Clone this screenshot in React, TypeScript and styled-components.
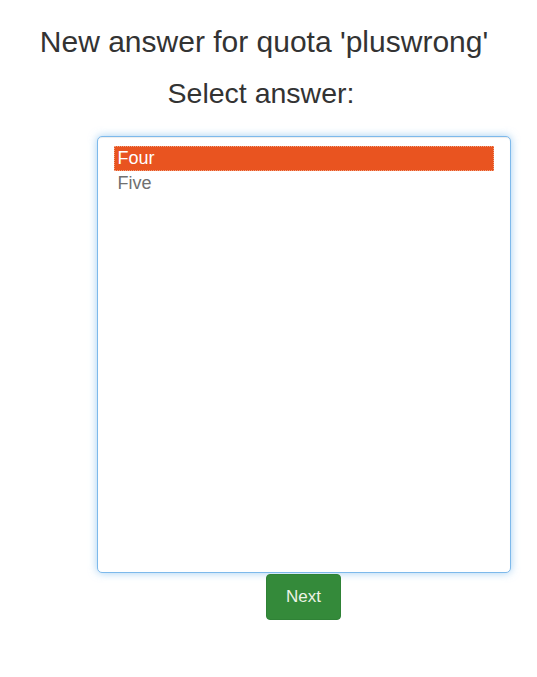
import * as React from 'react';
import styled, { createGlobalStyle } from 'styled-components';

const GlobalStyle = createGlobalStyle`
  html, body {
    margin: 0;
    padding: 0;
    background: #ffffff;
  }
  body {
    font-family: "Liberation Sans", Arial, Helvetica, sans-serif;
    color: #333333;
  }
`;

const answers = ['Four', 'Five'];

export default function App() {
  const [selected, setSelected] = React.useState(0);

  return (
    <Page>
      <GlobalStyle />
      <Title>New answer for quota 'pluswrong'</Title>
      <Prompt>Select answer:</Prompt>
      <Form onSubmit={e => e.preventDefault()}>
        <AnswerList role="listbox" tabIndex={0}>
          {answers.map((answer, index) => (
            <AnswerOption
              key={answer}
              role="option"
              aria-selected={index === selected}
              $active={index === selected}
              onClick={() => setSelected(index)}
            >
              {answer}
            </AnswerOption>
          ))}
        </AnswerList>
        <NextButton type="submit">Next</NextButton>
      </Form>
    </Page>
  );
}

const Page = styled.main`
  display: flex;
  flex-direction: column;
  width: 537px;
  min-height: 677px;
  padding-top: 25px;
  box-sizing: border-box;
`;

const Title = styled.h1`
  margin: 0;
  padding-right: 9px;
  text-align: center;
  font-size: 30px;
  font-weight: 400;
  line-height: 34px;
  color: #333333;
`;

const Prompt = styled.h2`
  margin: 18px 0 0 0;
  padding-right: 15px;
  text-align: center;
  font-size: 28.5px;
  font-weight: 400;
  line-height: 32px;
  color: #333333;
`;

const Form = styled.form`
  display: flex;
  flex-direction: column;
  align-items: center;
  padding-left: 70px;
  margin-top: 27px;
`;

const AnswerList = styled.div`
  width: 414px;
  height: 437px;
  box-sizing: border-box;
  padding: 9px 16px;
  background: #ffffff;
  border: 1px solid #7db9eb;
  border-radius: 5px;
  box-shadow: inset 0 1px 1px rgba(0, 0, 0, 0.075), 0 0 8px rgba(102, 175, 233, 0.6);
  outline: none;
`;

const AnswerOption = styled.div<{ $active?: boolean }>`
  height: 25px;
  padding: 0 4px;
  font-size: 18px;
  line-height: 25px;
  cursor: default;
  color: ${({ $active }) => ($active ? '#ffffff' : '#707070')};
  background: ${({ $active }) => ($active ? '#e95420' : 'transparent')};
  outline: ${({ $active }) => ($active ? '1px dotted #f2a080' : 'none')};
  outline-offset: -1px;
`;

const NextButton = styled.button`
  margin-top: 1px;
  width: 75px;
  height: 46px;
  border: 1px solid #2f8236;
  border-radius: 4px;
  background: #348a3a;
  color: #eef3e6;
  font-family: inherit;
  font-size: 17px;
  cursor: pointer;
`;
